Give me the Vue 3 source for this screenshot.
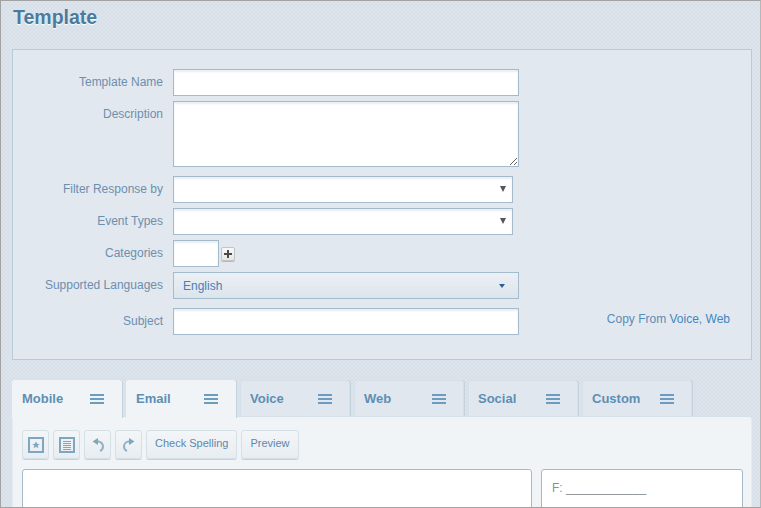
<script setup>
const labelRows = ['Filter Response by', 'Event Types']
const tabs = [
  { name: 'Mobile', active: true },
  { name: 'Email', active: true },
  { name: 'Voice' },
  { name: 'Web' },
  { name: 'Social' },
  { name: 'Custom' }
]
</script>

<template>
  <div class="page">
    <h1 class="title">Template</h1>

    <section class="panel">
      <div class="row">
        <label class="lab">Template Name</label>
        <input class="field wide" type="text" />
      </div>
      <div class="row top">
        <label class="lab lab-top">Description</label>
        <textarea class="field wide area"></textarea>
      </div>
      <div v-for="(l, i) in labelRows" :key="l" class="row" :class="{ sep: i === 0 }">
        <label class="lab">{{ l }}</label>
        <span class="sel-wrap"><select class="field sel"></select></span>
      </div>
      <div class="row">
        <label class="lab">Categories</label>
        <input class="field small" type="text" />
        <button class="plus" type="button" aria-label="Add">
          <svg width="10" height="10" viewBox="0 0 10 10"><path d="M4 1h2v3h3v2H6v3H4V6H1V4h3z" fill="#4a4a4a" /></svg>
        </button>
      </div>
      <div class="row">
        <label class="lab">Supported Languages</label>
        <div class="lang">
          <span>English</span>
          <i class="caret"></i>
        </div>
      </div>
      <div class="row sep subject">
        <label class="lab">Subject</label>
        <input class="field wide" type="text" />
        <span class="copy">Copy From <a>Voice</a>, <a>Web</a></span>
      </div>
    </section>

    <nav class="tabs">
      <div v-for="t in tabs" :key="t.name" class="tab" :class="{ active: t.active }">
        <span class="tab-name">{{ t.name }}</span>
        <span class="burger"><b></b><b></b><b></b></span>
      </div>
    </nav>

    <section class="content">
      <div class="toolbar">
        <button class="tool" type="button" aria-label="Favorite">
          <svg width="16" height="16" viewBox="0 0 16 16">
            <rect x="1" y="1" width="14" height="14" fill="none" stroke="#7fa6c0" stroke-width="2" />
            <path d="M8 4.200l1.100 2.500 2.600.2-2 1.700.7 2.600L8 9.800l-2.400 1.400.7-2.600-2-1.700 2.600-.2z" fill="#7fa6c0" />
          </svg>
        </button>
        <button class="tool" type="button" aria-label="List">
          <svg width="16" height="16" viewBox="0 0 16 16">
            <rect x="1" y="1" width="14" height="14" fill="none" stroke="#7fa6c0" stroke-width="2" />
            <path d="M4 4.500h8M4 6.500h8M4 8.500h8M4 10.500h8M4 12.500h8" stroke="#7fa6c0" stroke-width="1" />
          </svg>
        </button>
        <button class="tool" type="button" aria-label="Undo">
          <svg width="16" height="18" viewBox="0 0 16 18">
            <path d="M7 5.500h1a5 5 0 0 1 5 5 5 5 0 0 1-3 4.500" fill="none" stroke="#8fb0c8" stroke-width="2" />
            <path d="M8 2v7L2.500 5.500z" fill="#7fa6c0" />
          </svg>
        </button>
        <button class="tool" type="button" aria-label="Redo">
          <svg width="16" height="18" viewBox="0 0 16 18">
            <path d="M9 5.500H8a5 5 0 0 0-5 5 5 5 0 0 0 3 4.500" fill="none" stroke="#8fb0c8" stroke-width="2" />
            <path d="M8 2v7l5.500-3.500z" fill="#7fa6c0" />
          </svg>
        </button>
        <button class="tool text" type="button">Check Spelling</button>
        <button class="tool text" type="button">Preview</button>
      </div>
      <div class="editors">
        <div class="editor main"></div>
        <div class="editor side">F: ____________</div>
      </div>
    </section>
  </div>
</template>

<style>
html, body { margin: 0; padding: 0; background: #d9e2ea; }
</style>

<style scoped>
.page {
  box-sizing: border-box;
  width: 761px;
  height: 508px;
  overflow: hidden;
  border: 1px solid #a2a2a2;
  border-right-color: #b5b8bb;
  padding: 0 8px 0 11px;
  font-family: "Liberation Sans", Arial, sans-serif;
  font-size: 12px;
  background-color: #d7e0e8;
  background-image:
    linear-gradient(45deg, rgba(255,255,255,.14) 25%, transparent 25%, transparent 75%, rgba(255,255,255,.14) 75%),
    linear-gradient(45deg, rgba(255,255,255,.14) 25%, transparent 25%, transparent 75%, rgba(255,255,255,.14) 75%);
  background-size: 4px 4px;
  background-position: 0 0, 2px 2px;
}
.title {
  margin: 0;
  padding: 5px 0 0 1px;
  height: 48px;
  box-sizing: border-box;
  font-size: 19.5px;
  line-height: 22px;
  font-weight: 700;
  color: #4a7a9e;
  text-shadow: 0 1px 1px #fff;
}
.panel {
  box-sizing: border-box;
  width: 740px;
  height: 311px;
  padding-top: 19px;
  border: 1px solid #b7cbd9;
  background-color: #e1e7ee;
  background-image:
    linear-gradient(45deg, rgba(255,255,255,.1) 25%, transparent 25%, transparent 75%, rgba(255,255,255,.1) 75%),
    linear-gradient(45deg, rgba(255,255,255,.1) 25%, transparent 25%, transparent 75%, rgba(255,255,255,.1) 75%);
  background-size: 4px 4px;
  background-position: 0 0, 2px 2px;
}
.row {
  display: flex;
  align-items: center;
  margin-bottom: 5px;
}
.row.top { align-items: flex-start; }
.row.sep { margin-top: 9px; }
.row.subject { position: relative; }
.lab {
  width: 150px;
  margin-right: 10px;
  padding-bottom: 1px;
  flex: none;
  text-align: right;
  color: #6c8fae;
  line-height: 14px;
}
.lab-top { padding-top: 6px; }
.field {
  display: block;
  box-sizing: border-box;
  margin: 0;
  height: 27px;
  padding: 0 6px;
  border: 1px solid #a3bbcc;
  border-radius: 0;
  background: #fff;
  box-shadow: inset 0 2px 2px rgba(170, 185, 200, .25);
  outline: none;
  font: inherit;
}
.wide { width: 346px; }
.area { height: 66px; }
.sel-wrap {
  position: relative;
  display: block;
  width: 340px;
}
.sel-wrap::after {
  content: "";
  position: absolute;
  left: 327px;
  top: 10px;
  width: 0;
  height: 0;
  border-left: 3px solid transparent;
  border-right: 3px solid transparent;
  border-top: 6px solid #555;
}
.sel {
  width: 100%;
  appearance: none;
  color: #555;
}
.small { width: 46px; }
.plus {
  box-sizing: border-box;
  width: 14px;
  height: 14px;
  margin-left: 2px;
  padding: 0;
  display: flex;
  align-items: center;
  justify-content: center;
  border: 1px solid #c4c4c4;
  border-radius: 2px;
  background: linear-gradient(#f8f8f8, #e6e6e6);
  box-shadow: 0 1px 0 #b9b9b9;
}
.lang {
  box-sizing: border-box;
  width: 346px;
  height: 27px;
  padding: 0 13px 0 9px;
  display: flex;
  align-items: center;
  justify-content: space-between;
  border: 1px solid #a3bbcc;
  background: linear-gradient(#ebf0f4, #dbe5ec);
  color: #4b7db6;
}
.caret {
  width: 0;
  height: 0;
  border-left: 3.5px solid transparent;
  border-right: 3.5px solid transparent;
  border-top: 4px solid #2c5f8e;
}
.copy {
  position: absolute;
  right: 21px;
  top: 4px;
  line-height: 14px;
  color: #5a8db5;
}
.copy a { color: #3f87bf; }
.tabs {
  display: flex;
  gap: 4px;
  height: 36px;
  margin-top: 20px;
}
.tab {
  box-sizing: border-box;
  width: 110px;
  padding: 11px 0 0 9px;
  position: relative;
  border: 1px solid #d6e0e8;
  border-bottom: 0;
  border-radius: 3px 3px 0 0;
  background: #e1e7ee;
  box-shadow: 1px 0 0 #c3d2dd;
}
.tab.active {
  background: #f0f4f7;
  border-color: #f0f4f7;
  height: 38px;
  z-index: 1;
}
.tab-name {
  display: block;
  font-size: 13px;
  font-weight: 700;
  line-height: 14px;
  color: #5d8fb3;
}
.burger {
  position: absolute;
  left: 77px;
  top: 13px;
  width: 14px;
  display: flex;
  flex-direction: column;
  gap: 2px;
}
.burger b {
  display: block;
  height: 2px;
  background: #6c9dbe;
}
.content {
  box-sizing: border-box;
  width: 740px;
  height: 100px;
  padding: 13px 8px 0 9px;
  background: #f0f4f7;
  border: 1px solid #e3ebf0;
  border-top: 1px solid #d5e0e8;
  border-radius: 0 3px 0 0;
}
.toolbar {
  display: flex;
  gap: 4px;
}
.tool {
  box-sizing: border-box;
  width: 27px;
  height: 29px;
  padding: 0;
  display: flex;
  align-items: center;
  justify-content: center;
  border: 1px solid #d5dfe6;
  border-radius: 3px;
  background: linear-gradient(#f3f6f8, #e8edf1);
  box-shadow: 0 1px 0 #c6d2db;
  font: inherit;
  font-size: 11px;
  color: #5d87ab;
}
.tool.text { width: auto; padding: 0 8px 3px; }
.editors {
  display: flex;
  justify-content: space-between;
  margin-top: 10px;
}
.editor {
  box-sizing: border-box;
  height: 60px;
  background: #fff;
  border: 1px solid #a6b9c9;
  border-radius: 3px;
}
.main { width: 510px; }
.side {
  width: 202px;
  padding: 11px 10px;
  line-height: 14px;
  color: #8a8f94;
}
</style>
